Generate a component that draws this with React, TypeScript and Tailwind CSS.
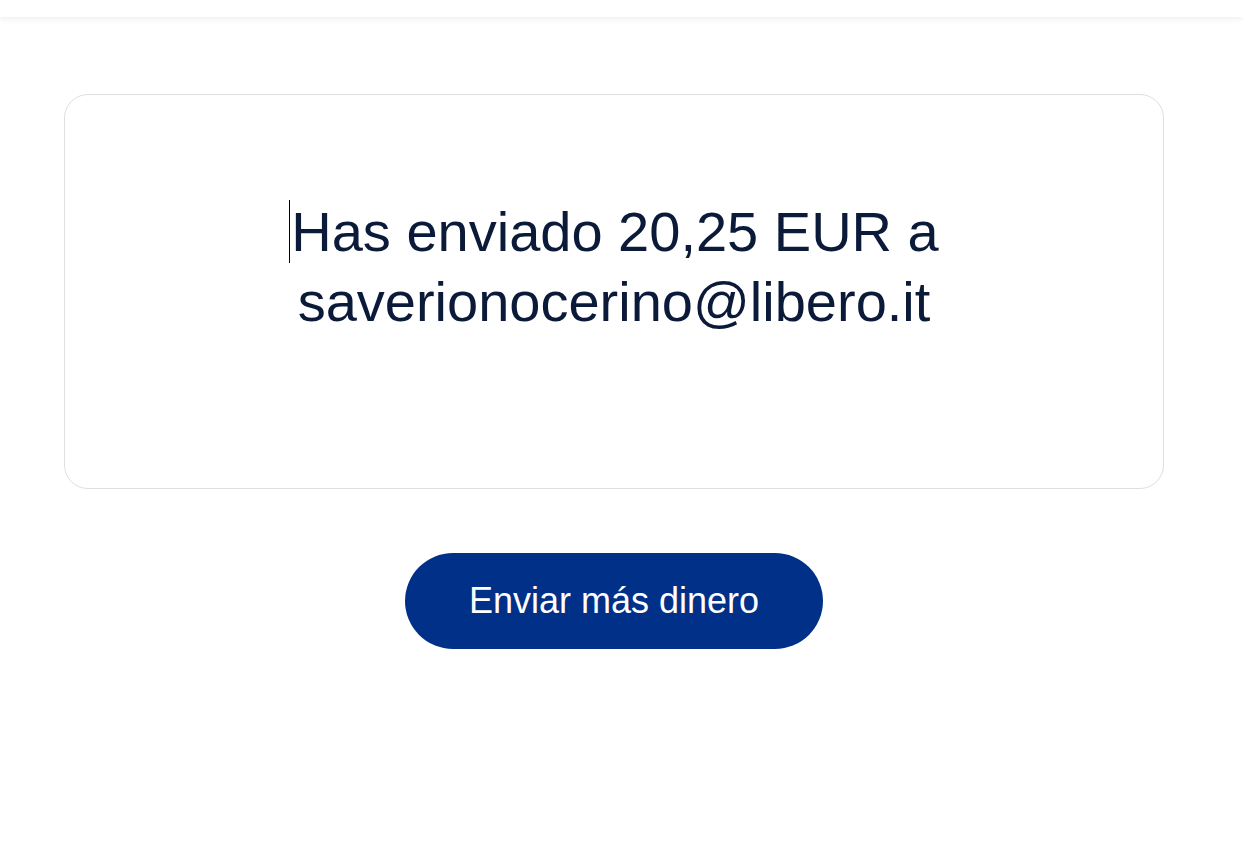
import React from 'react';

const App: React.FC = () => {
  return (
    <div className="min-h-[860px] w-full bg-white" style={{ fontFamily: '"Liberation Sans", Arial, sans-serif' }}>
      {/* top bar */}
      <div className="h-[17px] w-full bg-white shadow-[0_2px_6px_rgba(0,0,0,0.07)]" />

      <main className="flex flex-col items-start pl-16 pt-[77px]">
        <div className="w-[1100px] rounded-[24px] border border-[#dfdfdf] pt-[102px] pb-[151px]">
          <p className="text-center text-[56px] leading-[70px] text-[#0a1a38]">
            <span className="mr-[1px] inline-block h-[63px] w-px bg-black align-text-top" />
            Has enviado 20,25 EUR a
            <br />
            saverionocerino@libero.it
          </p>
        </div>

        <div className="flex w-[1100px] justify-center pt-[64px]">
          <button className="flex h-[96px] w-[418px] items-center justify-center rounded-full bg-[#003087] text-[36px] text-white">
            Enviar más dinero
          </button>
        </div>
      </main>
    </div>
  );
};

export default App;
